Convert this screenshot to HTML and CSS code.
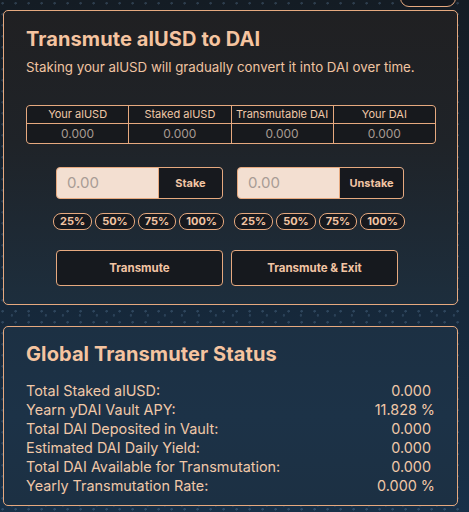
FILE: index.html
```html
<!DOCTYPE html>
<html>
<head>
<meta charset="utf-8">
<link rel="stylesheet" href="styles.css">
</head>
<body>
<div class="header"><div class="hbtn"></div></div>
<section class="card card-top">
  <h1 class="title">Transmute alUSD to DAI</h1>
  <p class="sub">Staking your alUSD will gradually convert it into DAI over time.</p>
  <div class="table">
    <div class="th">Your alUSD</div>
    <div class="th">Staked alUSD</div>
    <div class="th">Transmutable DAI</div>
    <div class="th">Your DAI</div>
    <div class="td">0.000</div>
    <div class="td">0.000</div>
    <div class="td">0.000</div>
    <div class="td">0.000</div>
  </div>
  <div class="actions">
    <div class="group">
      <div class="field"><span class="ph">0.00</span><span class="fbtn">Stake</span></div>
      <div class="pills"><span class="pill">25%</span><span class="pill">50%</span><span class="pill">75%</span><span class="pill">100%</span></div>
    </div>
    <div class="group">
      <div class="field"><span class="ph">0.00</span><span class="fbtn">Unstake</span></div>
      <div class="pills"><span class="pill">25%</span><span class="pill">50%</span><span class="pill">75%</span><span class="pill">100%</span></div>
    </div>
  </div>
  <div class="bigbtns">
    <div class="bigbtn">Transmute</div>
    <div class="bigbtn">Transmute &amp; Exit</div>
  </div>
</section>
<section class="card card-bottom">
  <h2 class="title">Global Transmuter Status</h2>
  <div class="stats">
    <div class="row"><span>Total Staked alUSD:</span><span class="v">0.000</span></div>
    <div class="row"><span>Yearn yDAI Vault APY:</span><span class="v pct">11.828 %</span></div>
    <div class="row"><span>Total DAI Deposited in Vault:</span><span class="v">0.000</span></div>
    <div class="row"><span>Estimated DAI Daily Yield:</span><span class="v">0.000</span></div>
    <div class="row"><span>Total DAI Available for Transmutation:</span><span class="v">0.000</span></div>
    <div class="row"><span>Yearly Transmutation Rate:</span><span class="v pct">0.000 %</span></div>
  </div>
</section>
</body>
</html>
```
FILE: styles.css
```css
html, body { margin: 0; padding: 0; }
body {
  width: 469px;
  height: 512px;
  overflow: hidden;
  font-family: "Inter", "Open Sans", sans-serif;
  color: #f2c6a2;
  background-color: #142130;
  background-image:
    radial-gradient(circle at 20% 30%, rgba(120,160,200,0.25) 0 1px, transparent 1.5px),
    radial-gradient(circle at 70% 60%, rgba(120,160,200,0.2) 0 1px, transparent 1.5px),
    linear-gradient(180deg, #141c24 0%, #16283a 60%, #183048 100%);
  background-size: 13px 11px, 17px 19px, 100% 100%;
}
.header {
  height: 5px;
  display: flex;
  justify-content: flex-end;
  padding-right: 13px;
}
.hbtn {
  width: 54px;
  height: 28px;
  margin-top: -23px;
  border: 1px solid #e6a97f;
  border-radius: 9px;
  background: #12161c;
}
.card {
  margin: 5px 11px 0 3px;
  border: 1px solid #e6a97f;
  border-radius: 5px;
  padding: 0 22px;
}
.card-top {
  height: 293px;
  background: linear-gradient(180deg, #202022 0%, #1f2328 45%, #1d2e3d 100%);
}
.card-bottom {
  margin-top: 21px;
  height: 178px;
  background: linear-gradient(180deg, #1c3043 0%, #1c3247 50%, #1c3043 100%);
}
.title {
  margin: 0;
  font-size: 20px;
  font-weight: 700;
  color: #f5c4a0;
  letter-spacing: 0.1px;
}
.card-top .title { padding-top: 16px; line-height: 24px; }
.sub {
  margin: 8px 0 0;
  font-size: 13.3px;
  line-height: 16px;
  color: #f0c4a2;
}
.table {
  margin-top: 30px;
  width: 408px;
  display: grid;
  grid-template-columns: repeat(4, 1fr);
  border: 1px solid #e6a97f;
  border-radius: 4px;
  background: #e6a97f;
  gap: 1px;
  overflow: hidden;
}
.th, .td {
  background: #17191d;
  text-align: center;
  font-size: 11px;
  height: 17px;
  line-height: 17px;
}
.th { color: #f0c8a8; }
.td { color: #a79b92; font-size: 12px; height: 19px; line-height: 19px; }
.actions {
  margin-top: 23px;
  display: flex;
  gap: 14px;
  padding-left: 30px;
}
.group { width: 167px; display: flex; flex-direction: column; align-items: flex-start; }
.field {
  width: 165px;
  height: 30px;
  display: flex;
  border: 1px solid #e6a97f;
  border-radius: 4px;
  background: #f3dfd1;
  overflow: hidden;
}
.ph {
  flex: 1;
  padding-left: 10px;
  line-height: 30px;
  font-size: 15px;
  color: #a89c95;
}
.fbtn {
  width: 63px;
  background: #17191e;
  border-left: 1px solid #e6a97f;
  text-align: center;
  line-height: 30px;
  font-size: 11px;
  font-weight: 700;
  color: #f2c5a4;
}
.pills {
  margin-top: 14px;
  margin-left: -3px;
  display: flex;
  gap: 3px;
  white-space: nowrap;
}
.pill {
  border: 1px solid #e6a97f;
  border-radius: 8px;
  background: #17191e;
  font-size: 11px;
  font-weight: 700;
  color: #f2c5a4;
  padding: 0 6px;
  height: 15px;
  line-height: 15px;
}
.bigbtns {
  margin-top: 20px;
  padding-left: 30px;
  display: flex;
  gap: 8px;
}
.bigbtn {
  width: 165px;
  height: 34px;
  border: 1px solid #e6a97f;
  border-radius: 4px;
  background: #16191e;
  text-align: center;
  line-height: 34px;
  font-size: 11.5px;
  font-weight: 700;
  color: #f2c5a4;
}
.card-bottom .title { padding-top: 15px; line-height: 24px; }
.stats { margin-top: 15px; width: 409px; }
.row {
  display: flex;
  justify-content: space-between;
  font-size: 14.4px;
  line-height: 19px;
  height: 19px;
  color: #f0c8a8;
}
.v { padding-right: 4px; }
.v.pct { padding-right: 0; }
```
